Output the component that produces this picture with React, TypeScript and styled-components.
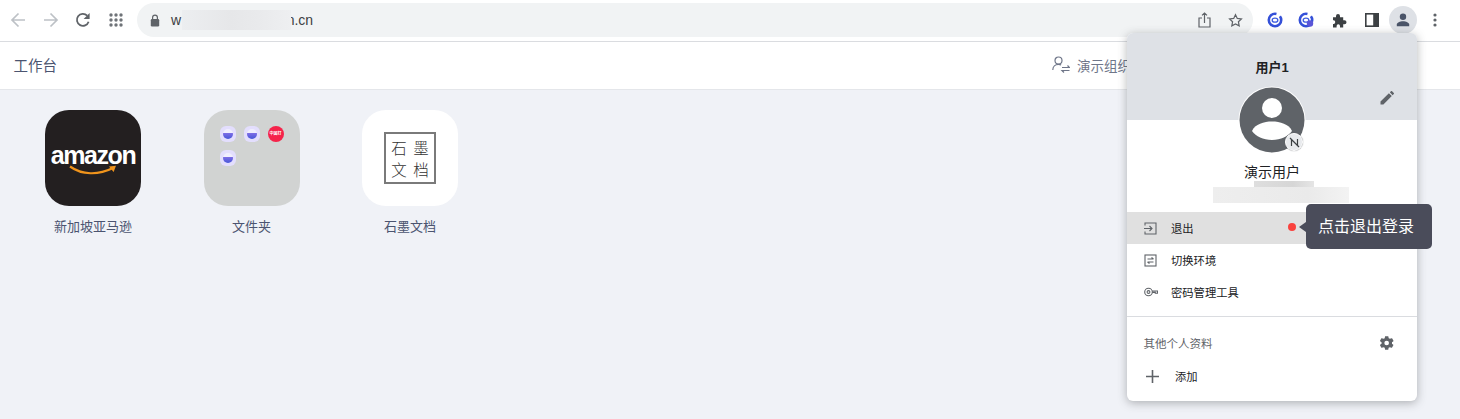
import React from "react";
import styled, { createGlobalStyle } from "styled-components";

const Global = createGlobalStyle`
  html, body { margin: 0; padding: 0; background: #f0f2f7; }
  body { font-family: "Liberation Sans", "Noto Sans CJK SC", sans-serif; }
  * { box-sizing: border-box; }
`;
const Page = styled.div`
  position: relative;
  width: 1460px;
  height: 419px;
  overflow: hidden;
  background: #f0f2f7;
`;
const BrowserBar = styled.div`
  height: 42px;
  background: #fff;
  border-bottom: 1px solid #dadce0;
  display: flex;
  align-items: flex-start;
  padding-top: 3px;
`;
const NavGroup = styled.div`
  display: flex;
  width: 137px;
  height: 34px;
  align-items: center;
  padding-left: 2px;
`;
const NavSlot = styled.div`
  width: 32.5px;
  display: flex;
  justify-content: center;
  svg { display: block; }
`;
const Omnibox = styled.div`
  width: 1116px;
  height: 34px;
  border-radius: 17px;
  background: #f1f3f4;
  display: flex;
  align-items: center;
  padding: 0 10px 0 13px;
  font-size: 14px;
  color: #3c4043;
`;
const LockSlot = styled.div`
  width: 21px;
  display: flex;
  svg { display: block; }
`;
const UrlBlur = styled.span`
  position: relative;
  z-index: 1;
  display: inline-block;
  width: 109px;
  height: 20px;
  margin: 0 -4.5px 0 1px;
  background: linear-gradient(90deg, #eceef0, #e6e7e9 45%, #e9eaec 70%, #eeeff1);
`;
const OmniActions = styled.div`
  margin-left: auto;
  display: flex;
  gap: 17px;
  align-items: center;
  svg { display: block; }
`;
const Extensions = styled.div`
  flex: 1;
  height: 34px;
  padding-left: 6px;
  display: flex;
  align-items: center;
  svg { display: block; }
`;
const ExtSlot = styled.div<{ $w: number }>`
  width: ${(p) => p.$w}px;
  display: flex;
  justify-content: center;
`;
const ProfileBtn = styled.div`
  width: 28px;
  height: 28px;
  margin-left: 2px;
  border-radius: 50%;
  background: #dee1e6;
  display: flex;
  align-items: center;
  justify-content: center;
`;
const AppHeader = styled.div`
  height: 48px;
  background: #fff;
  border-bottom: 1px solid #e4e6ea;
  display: flex;
  align-items: center;
  padding: 0 0 2px 13.5px;
`;
const HeaderTitle = styled.div`
  font-size: 14.5px;
  color: #4b5470;
`;
const OrgSwitch = styled.div`
  margin-left: 995px;
  display: flex;
  align-items: center;
  gap: 7px;
  font-size: 13.5px;
  color: #6f7689;
  white-space: nowrap;
  svg { display: block; }
`;
const Grid = styled.div`
  display: flex;
  padding: 20px 0 0 45px;
`;
const AppItem = styled.div`
  width: 96px;
  margin-right: 62.5px;
  display: flex;
  flex-direction: column;
  align-items: center;
`;
const AppIcon = styled.div<{ $bg: string }>`
  width: 96px;
  height: 96px;
  border-radius: 24px;
  background: ${(p) => p.$bg};
  display: flex;
  flex-direction: column;
  align-items: center;
  justify-content: center;
`;
const AppLabel = styled.div`
  margin-top: 12px;
  font-size: 13px;
  line-height: 18px;
  color: #4b5470;
  white-space: nowrap;
`;
const AmazonWord = styled.div`
  font: bold 25px/24px "Liberation Sans", sans-serif;
  letter-spacing: -1.4px;
  color: #fff;
  margin-top: 2px;
`;
const FolderGrid = styled.div`
  width: 96px;
  height: 96px;
  padding: 16px 0 0 16px;
  display: grid;
  grid-template-columns: repeat(3, 16px);
  grid-auto-rows: 16px;
  gap: 8px;
`;
const MiniApp = styled.div`
  width: 16px;
  height: 16px;
  border-radius: 6px;
  background: #e3defd;
  display: flex;
  align-items: center;
  justify-content: center;
`;
const MiniBowl = styled.div`
  width: 10px;
  height: 10px;
  border-radius: 50%;
  background: linear-gradient(#f0eefe 0 40%, #7f6ee6 40%, #4757d8);
`;
const MiniBadge = styled.div`
  width: 16px;
  height: 16px;
  border-radius: 50%;
  background: #f5234a;
  color: #fff;
  font-size: 4px;
  font-weight: bold;
  line-height: 16px;
  text-align: center;
  white-space: nowrap;
  overflow: hidden;
`;
const ShimoMark = styled.div`
  width: 52px;
  height: 52px;
  border: 2px solid #7a7a7a;
  display: grid;
  grid-template-columns: 1fr 1fr;
  grid-auto-rows: 22.5px;
  place-items: center;
  padding: 1.5px 2px;
  font: 300 15.5px/22.5px "Noto Sans CJK SC", sans-serif;
  color: #333;
`;
const Popup = styled.div`
  position: absolute;
  left: 1127px;
  top: 33px;
  width: 290px;
  height: 368px;
  border-radius: 6px;
  background: #fff;
  overflow: hidden;
  box-shadow: 0 2px 10px rgba(60, 64, 67, 0.38);
  display: flex;
  flex-direction: column;
`;
const PopupHead = styled.div`
  height: 87px;
  background: #dee1e6;
  display: flex;
  justify-content: center;
  padding-top: 26px;
  font-size: 13px;
  font-weight: bold;
  line-height: 18px;
  color: #202124;
  position: relative;
`;
const EditBtn = styled.div`
  position: absolute;
  right: 23px;
  top: 58px;
  svg { display: block; }
`;
const AvatarWrap = styled.div`
  position: relative;
  width: 68px;
  height: 68px;
  margin: -34px auto 0;
  svg { display: block; }
`;
const AvatarBadge = styled.div`
  position: absolute;
  right: 3px;
  bottom: 3px;
  width: 18px;
  height: 18px;
  border-radius: 50%;
  background: #e8eaed;
  border: 1px solid #fff;
  display: flex;
  align-items: center;
  justify-content: center;
  box-shadow: 0 0 1px #5f6368;
`;
const UserName = styled.div`
  margin-top: 8px;
  text-align: center;
  font-size: 14px;
  line-height: 20px;
  color: #202124;
`;
const EmailBlur = styled.div`
  position: relative;
  margin: -1px 0 0 86px;
  width: 136px;
  height: 22px;
`;
const EmailTop = styled.div`
  position: absolute;
  left: 41px;
  top: 0;
  width: 60px;
  height: 6px;
  background: linear-gradient(90deg, #dedede, #d6d6d6 65%, #e5e5e5);
`;
const EmailBottom = styled.div`
  position: absolute;
  left: 0;
  top: 6px;
  width: 136px;
  height: 16px;
  background: linear-gradient(90deg, #eeeeee, #eaeaea 70%, #f3f3f3);
`;
const MenuList = styled.div`
  margin-top: 9px;
`;
const MenuRow = styled.div<{ $active?: boolean }>`
  height: 32px;
  display: flex;
  align-items: center;
  padding-left: 17px;
  background: ${(p) => (p.$active ? "#e0e0e0" : "transparent")};
  font-size: 11.3px;
  color: #202124;
  svg { display: block; }
`;
const MenuIcon = styled.div`
  width: 27px;
  flex: none;
`;
const Divider = styled.div`
  height: 1px;
  margin-top: 8px;
  background: #dadce0;
`;
const OthersRow = styled.div`
  height: 51px;
  display: flex;
  align-items: center;
  justify-content: space-between;
  padding: 0 22px 0 16.5px;
  font-size: 11.5px;
  color: #5f6368;
  svg { display: block; }
`;
const AddRow = styled.div`
  height: 16px;
  display: flex;
  align-items: center;
  gap: 16px;
  padding-left: 19px;
  font-size: 11.3px;
  color: #202124;
  svg { display: block; }
`;
const RedDot = styled.div`
  position: absolute;
  left: 1288px;
  top: 223px;
  width: 8px;
  height: 8px;
  border-radius: 50%;
  background: #f9423e;
`;
const Tip = styled.div`
  position: absolute;
  left: 1306px;
  top: 204px;
  width: 126px;
  height: 45px;
  padding-right: 6px;
  border-radius: 5px;
  background: #4a4c5a;
  color: #fff;
  font-size: 16px;
  line-height: 45px;
  text-align: center;
  white-space: nowrap;
  &::before {
    content: "";
    position: absolute;
    left: -7px;
    top: 18px;
    border: 5px solid transparent;
    border-left: 0;
    border-right: 7px solid #4a4c5a;
  }
`;

const Arrow = ({ flip }: { flip?: boolean }) => (
  <svg width="16" height="16" viewBox="0 0 16 16" fill="none" stroke="#bdc1c6" strokeWidth="1.7" style={flip ? { transform: "scaleX(-1)" } : undefined}>
    <path d="M15 8H2M8.5 1.500 2 8l6.500 6.500" />
  </svg>
);
const Dots = () => (
  <svg width="14" height="14" viewBox="0 0 14 14" fill="#6f7378">
    {[2, 7, 12].flatMap((y) => [2, 7, 12].map((x) => <circle key={`${x}-${y}`} cx={x} cy={y} r="1.7" />))}
  </svg>
);

const ExtRing = ({ badge }: { badge?: boolean }) => (
  <svg width="16" height="16" viewBox="0 0 16 16" fill="none">
    <circle cx="8" cy="8" r="6.200" stroke="#3450d8" strokeWidth="2.600" strokeDasharray="30 4" />
    <ellipse cx="8" cy="8.200" rx="2.800" ry="2" stroke="#3c5ae0" strokeWidth="1.300" />
    {badge && <circle cx="12" cy="11.500" r="3.200" fill="#5a55d8" />}
  </svg>
);

export default function App() {
  return (
    <Page>
      <Global />
      <BrowserBar>
        <NavGroup>
          <NavSlot><Arrow /></NavSlot>
          <NavSlot><Arrow flip /></NavSlot>
          <NavSlot>
            <svg width="16" height="16" viewBox="0 0 16 16" fill="none">
              <path d="M13.600 9.700A6 6 0 1 1 12.200 3.600" stroke="#5f6368" strokeWidth="1.800" />
              <path d="M14.600 1v6h-6z" fill="#5f6368" />
            </svg>
          </NavSlot>
          <NavSlot><Dots /></NavSlot>
        </NavGroup>
        <Omnibox>
          <LockSlot>
            <svg width="10" height="13" viewBox="0 0 10 13" fill="#5f6368">
              <rect x="0.800" y="5" width="8.400" height="7.400" rx="1.200" />
              <path d="M2.600 5.500V3.600a2.400 2.400 0 0 1 4.800 0v1.900" fill="none" stroke="#5f6368" strokeWidth="1.200" />
            </svg>
          </LockSlot>
          w<UrlBlur />n.cn
          <OmniActions>
            <svg width="13" height="16" viewBox="0 0 13 16" fill="none" stroke="#5f6368" strokeWidth="1.200">
              <path d="M4 6H1v9h11V6H9M6.500 11V1M4 3.400 6.500 1 9 3.400" />
            </svg>
            <svg width="15" height="15" viewBox="0 0 16 16" fill="none" stroke="#5f6368" strokeWidth="1.300">
              <path d="m8 1.800 1.900 4 4.400.5-3.200 3 .8 4.400L8 11.600l-3.900 2.100.8-4.400-3.200-3 4.400-.5z" />
            </svg>
          </OmniActions>
        </Omnibox>
        <Extensions>
          <ExtSlot $w={32}><ExtRing /></ExtSlot>
          <ExtSlot $w={30}><ExtRing badge /></ExtSlot>
          <ExtSlot $w={36}>
            <svg width="15" height="15" viewBox="0 0 15 15" fill="#3c4043">
              <path d="M1 4.200h3V3a2 2 0 0 1 4 0v1.200h3.200v3H12.500a2 2 0 0 1 0 4h-1.300v3.300H8V13a1.700 1.700 0 0 0-3.400 0v1.500H1v-3.600h1a2 2 0 0 0 0-3.700H1z" />
            </svg>
          </ExtSlot>
          <ExtSlot $w={30}>
            <svg width="14" height="14" viewBox="0 0 14 14">
              <rect width="14" height="14" fill="#3c4043" />
              <rect x="1.600" y="1.600" width="6.600" height="10.800" fill="#fff" />
            </svg>
          </ExtSlot>
          <ProfileBtn>
            <svg width="14" height="14" viewBox="0 0 14 14" fill="#4a5468">
              <circle cx="7" cy="3.800" r="3.200" />
              <path d="M.8 13.200v-1.600C.8 9.600 4 8.300 7 8.300s6.200 1.300 6.200 3.300v1.600z" />
            </svg>
          </ProfileBtn>
          <ExtSlot $w={36}>
            <svg width="4" height="14" viewBox="0 0 4 14" fill="#5f6368">
              <circle cx="2" cy="2" r="1.600" /><circle cx="2" cy="7" r="1.600" /><circle cx="2" cy="12" r="1.600" />
            </svg>
          </ExtSlot>
        </Extensions>
      </BrowserBar>
      <AppHeader>
        <HeaderTitle>工作台</HeaderTitle>
        <OrgSwitch>
          <svg width="18" height="17" viewBox="0 0 18 17" fill="none" stroke="#6f7689" strokeWidth="1.200">
            <circle cx="6.500" cy="4.500" r="3.500" />
            <path d="M.8 14c0-3.400 2.400-5.600 5.700-5.600 1 0 1.800.2 2.600.5M10 11.500h7.500l-2-2M17.500 14.500H10l2 2" />
          </svg>
          演示组织
        </OrgSwitch>
      </AppHeader>
      <Grid>
        <AppItem>
          <AppIcon $bg="#231f20">
            <AmazonWord>amazon</AmazonWord>
            <svg width="56" height="11" viewBox="0 0 56 11" fill="none" style={{ marginTop: -2 }}>
              <path d="M5 1.500c12 8.500 28 9 43 1.500" stroke="#f0941c" strokeWidth="2.200" />
              <path d="m44 1.500 7-.8-2.400 6.200z" fill="#f0941c" />
            </svg>
          </AppIcon>
          <AppLabel>新加坡亚马逊</AppLabel>
        </AppItem>
        <AppItem>
          <AppIcon $bg="#d1d3d2">
            <FolderGrid>
              <MiniApp><MiniBowl /></MiniApp>
              <MiniApp><MiniBowl /></MiniApp>
              <MiniBadge>中国打</MiniBadge>
              <MiniApp><MiniBowl /></MiniApp>
            </FolderGrid>
          </AppIcon>
          <AppLabel>文件夹</AppLabel>
        </AppItem>
        <AppItem>
          <AppIcon $bg="#fff">
            <ShimoMark>
              <span>石</span><span>墨</span><span>文</span><span>档</span>
            </ShimoMark>
          </AppIcon>
          <AppLabel>石墨文档</AppLabel>
        </AppItem>
      </Grid>
      <Popup>
        <PopupHead>
          用户1
          <EditBtn>
            <svg width="14" height="14" viewBox="0 0 14 14" fill="#5f6368">
              <path d="M.5 13.500V10.600L8.900 2.200l2.900 2.900-8.400 8.400zM9.800 1.300 11 .2a.8.8 0 0 1 1.100 0l1.700 1.700a.8.8 0 0 1 0 1.100l-1.200 1.200z" />
            </svg>
          </EditBtn>
        </PopupHead>
        <AvatarWrap>
          <svg width="68" height="68" viewBox="0 0 68 68">
            <circle cx="34" cy="34" r="33.500" fill="#fff" />
            <circle cx="34" cy="34" r="32.500" fill="#5f6368" />
            <circle cx="34" cy="22" r="10" fill="#fff" />
            <path d="M14 45c3-7 12-9.500 20-9.500S51 38 54 45c-4 5.500-11 9-20 9s-16-3.500-20-9z" fill="#fff" />
          </svg>
          <AvatarBadge>
            <svg width="11" height="11" viewBox="0 0 11 11" fill="none" stroke="#3c4043" strokeWidth="1.200">
              <path d="M2.500 9V2.500l6 6V2M1 1l9 9" />
            </svg>
          </AvatarBadge>
        </AvatarWrap>
        <UserName>演示用户</UserName>
        <EmailBlur>
          <EmailTop />
          <EmailBottom />
        </EmailBlur>
        <MenuList>
          <MenuRow $active>
            <MenuIcon>
              <svg width="13" height="13" viewBox="0 0 13 13" fill="none" stroke="#5f6368" strokeWidth="1.100">
                <path d="M1 3.500V1h11v11H1V9.500M0 6.500h7.500M5.500 4l2.500 2.500L5.500 9" />
              </svg>
            </MenuIcon>
            退出
          </MenuRow>
          <MenuRow>
            <MenuIcon>
              <svg width="13" height="13" viewBox="0 0 13 13" fill="none" stroke="#5f6368" strokeWidth="1.100">
                <rect x="1" y="1" width="11" height="11" />
                <path d="M3.500 5h6M7.500 3.500 9.500 5M9.500 8h-6M5.500 9.500 3.500 8" />
              </svg>
            </MenuIcon>
            切换环境
          </MenuRow>
          <MenuRow>
            <MenuIcon>
              <svg width="14" height="10" viewBox="0 0 14 10" fill="none" stroke="#5f6368" strokeWidth="1.100">
                <circle cx="4.500" cy="5" r="3.800" />
                <circle cx="4.500" cy="5" r="1.400" />
                <path d="M8.200 4h5.300v2.200h-2.200v-.8H8.200" />
              </svg>
            </MenuIcon>
            密码管理工具
          </MenuRow>
        </MenuList>
        <Divider />
        <OthersRow>
          其他个人资料
          <svg width="16" height="16" viewBox="0 0 24 24" fill="#5f6368">
            <path d="M19.400 13c.1-.3.1-.7.1-1s0-.7-.1-1l2.200-1.700c.2-.2.200-.4.100-.7l-2.100-3.600c-.1-.2-.4-.3-.6-.2l-2.600 1c-.5-.4-1.100-.7-1.800-1L14 2.100c0-.2-.3-.4-.5-.4h-4c-.3 0-.5.200-.5.400l-.4 2.700c-.6.3-1.200.6-1.800 1l-2.500-1c-.3-.1-.5 0-.7.200L1.500 8.600c-.1.300 0 .5.200.7L3.900 11c-.1.300-.1.700-.1 1s0 .7.100 1l-2.200 1.700c-.2.200-.3.400-.2.700l2.100 3.600c.2.200.4.300.7.200l2.500-1c.6.400 1.200.7 1.800 1l.4 2.700c0 .2.200.4.500.4h4c.2 0 .5-.2.500-.4l.4-2.700c.7-.3 1.300-.6 1.800-1l2.600 1c.2.100.5 0 .6-.2l2.100-3.600c.1-.3.1-.5-.1-.7zM11.500 15.500a3.500 3.500 0 1 1 0-7 3.500 3.500 0 0 1 0 7z" />
          </svg>
        </OthersRow>
        <AddRow>
          <svg width="13" height="13" viewBox="0 0 13 13" stroke="#5f6368" strokeWidth="1.600">
            <path d="M6.500 0v13M0 6.500h13" />
          </svg>
          添加
        </AddRow>
      </Popup>
      <RedDot />
      <Tip>点击退出登录</Tip>
    </Page>
  );
}
